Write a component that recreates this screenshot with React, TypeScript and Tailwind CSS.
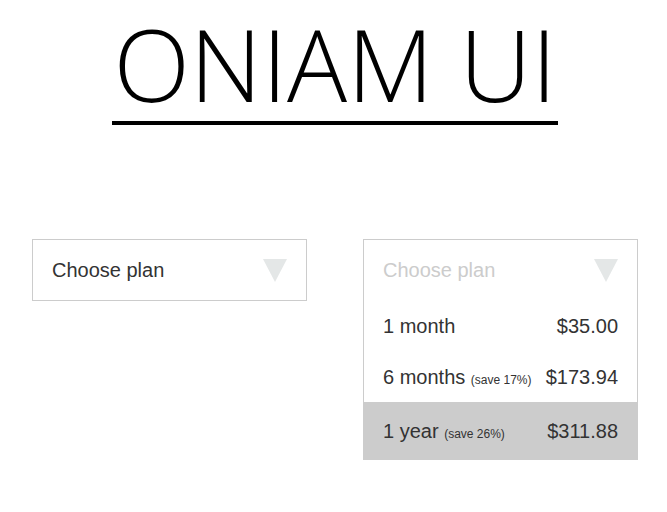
import React from "react";

function Tri() {
  return (
    <svg width="24" height="23" viewBox="0 0 24 23" className="block">
      <polygon points="0,0 24,0 12,23" fill="#e4e7e7" />
    </svg>
  );
}

export default function App() {
  return (
    <div className="w-[667px] h-[512px] bg-white overflow-hidden" style={{ fontFamily: '"Liberation Sans", Arial, sans-serif' }}>
      <div className="flex justify-center pt-[5px] pl-[3px]">
        <div className="border-b-[4px] border-black px-[1px]">
          <h1
            className="text-[100px] leading-[116px] font-light text-black whitespace-nowrap"
            style={{ fontFamily: '"Open Sans", sans-serif' }}
          >
            ONIAM UI
          </h1>
        </div>
      </div>

      <div className="flex justify-start items-start gap-[56px] pl-[32px] mt-[114px] text-[#333]">
        <div className="w-[275px] h-[62px] border border-[#cccccc] flex items-center justify-between pl-[19px] pr-[19px]">
          <span className="text-[20px]">Choose plan</span>
          <Tri />
        </div>

        <div className="w-[275px] border border-[#cccccc]">
          <div className="h-[60px] flex items-center justify-between pl-[19px] pr-[19px]">
            <span className="text-[20px] text-[#cccccc]">Choose plan</span>
            <Tri />
          </div>
          <div className="h-[52px] flex items-center justify-between pl-[19px] pr-[19px] text-[20px]">
            <span>1 month</span>
            <span>$35.00</span>
          </div>
          <div className="h-[50px] flex items-center justify-between pl-[19px] pr-[19px] text-[20px]">
            <span>
              6 months <span className="text-[12px]">(save 17%)</span>
            </span>
            <span>$173.94</span>
          </div>
          <div className="h-[58px] -mx-px -mb-px bg-[#cccccc] flex items-center justify-between pl-[20px] pr-[20px] text-[20px]">
            <span>
              1 year <span className="text-[12px]">(save 26%)</span>
            </span>
            <span>$311.88</span>
          </div>
        </div>
      </div>
    </div>
  );
}
